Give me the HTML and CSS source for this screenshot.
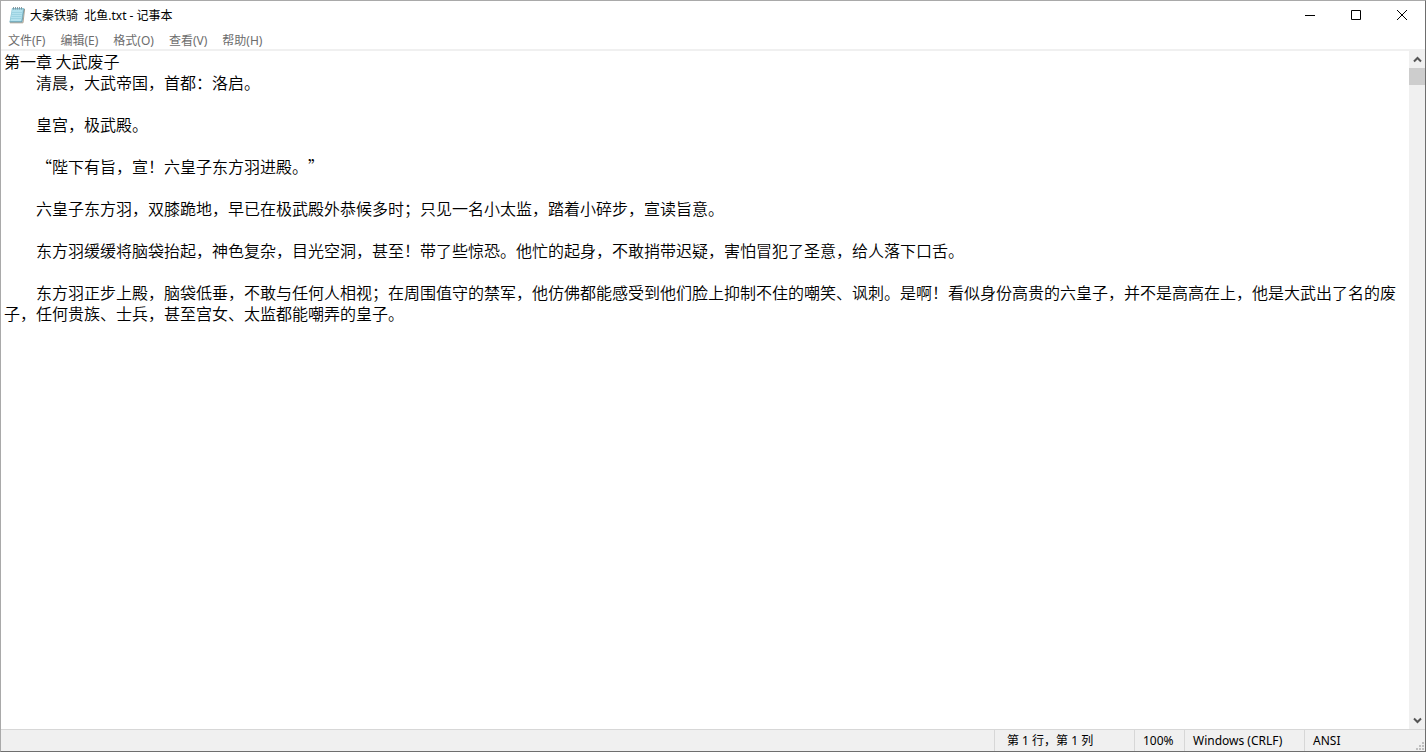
FILE: index.html
```html
<!doctype html>
<html lang="zh-CN">
    <head>
        <meta charset="utf-8">
        <title>大秦铁骑  北鱼.txt - 记事本</title>
        <link rel="stylesheet" href="styles.css">
    </head>
    <body>
        <div id="app">
            <header class="titlebar">
                <svg class="logo" width="16" height="18" viewBox="0 0 16 18">
                    <path d="M15 3L15.6 3L14 16.8L1 16.8" fill="none" stroke="#9a8c76" stroke-width=".8"/>
                    <path d="M3 2 L15 2 L13 16 L0.5 16 Z" fill="#8cc6d6"/>
                    <path d="M3.4 3.5 L13.8 3.5 L12.2 15 L1.4 15 Z" fill="#b4e2ee"/>
                    <path d="M3 6.5H13M2.6 8.5H12.7M2.4 10.5H12.4M2 12.5H12" stroke="#93cddd" stroke-width=".7"/>
                    <path d="M0.5 16 L13 16 L15 3" fill="none" stroke="#5f909f" stroke-width=".8"/>
                    <path d="M4.5 1V3.5M6.5 1V3.5M8.5 1V3.5M10.5 1V3.5M12.5 1V3.5" stroke="#7d9097" stroke-width=".9"/>
                </svg>
                <h1>大秦铁骑  北鱼.txt - 记事本</h1>
                <div class="controls">
                    <button aria-label="最小化"><svg width="10" height="10" viewBox="0 0 10 10"><path d="M0 5.5H10"/></svg></button>
                    <button aria-label="最大化"><svg width="10" height="10" viewBox="0 0 10 10"><path d="M.5 .5H9.5V9.5H.5Z"/></svg></button>
                    <button aria-label="关闭"><svg width="10" height="10" viewBox="0 0 10 10"><path d="M0 0L10 10M10 0L0 10"/></svg></button>
                </div>
            </header>
            <nav class="menu">
                <button>文件(F)</button>
                <button>编辑(E)</button>
                <button>格式(O)</button>
                <button>查看(V)</button>
                <button>帮助(H)</button>
            </nav>
            <main class="editor">
                <textarea aria-label="文本编辑器" spellcheck="false">第一章 大武废子
　　清晨，大武帝国，首都：洛启。

　　皇宫，极武殿。

　　“陛下有旨，宣！六皇子东方羽进殿。”

　　六皇子东方羽，双膝跪地，早已在极武殿外恭候多时；只见一名小太监，踏着小碎步，宣读旨意。

　　东方羽缓缓将脑袋抬起，神色复杂，目光空洞，甚至！带了些惊恐。他忙的起身，不敢捎带迟疑，害怕冒犯了圣意，给人落下口舌。

　　东方羽正步上殿，脑袋低垂，不敢与任何人相视；在周围值守的禁军，他仿佛都能感受到他们脸上抑制不住的嘲笑、讽刺。是啊！看似身份高贵的六皇子，并不是高高在上，他是大武出了名的废子，任何贵族、士兵，甚至宫女、太监都能嘲弄的皇子。</textarea>
                <div class="scrollbar">
                    <button aria-label="向上滚动"><svg width="9" height="7" viewBox="0 0 9 7"><path d="M1 5.5L4.5 2L8 5.5"/></svg></button>
                    <div class="track"><div class="thumb"></div></div>
                    <button aria-label="向下滚动"><svg width="9" height="7" viewBox="0 0 9 7"><path d="M1 1.5L4.5 5L8 1.5"/></svg></button>
                </div>
            </main>
            <footer class="status">
                <span class="position">第 1 行，第 1 列</span>
                <span class="zoom">100%</span>
                <span class="newline">Windows (CRLF)</span>
                <span class="encoding">ANSI</span>
                <svg class="grip" width="9" height="9" viewBox="0 0 9 9">
                    <path d="M6 0h2v2h-2zM3 3h2v2h-2zM6 3h2v2h-2zM0 6h2v2h-2zM3 6h2v2h-2zM6 6h2v2h-2z"/>
                </svg>
            </footer>
        </div>
    </body>
</html>
```
FILE: styles.css
```css
* { margin: 0; padding: 0; box-sizing: border-box; }

body {
    height: 100vh;
    font-family: "Noto Sans", "Noto Sans CJK SC", sans-serif;
    font-size: 12px;
    color: #000;
    background: #fff;
}

button {
    border: none;
    background: transparent;
    font-family: inherit;
    font-size: inherit;
    color: inherit;
}

#app {
    height: 100%;
    display: flex;
    flex-direction: column;
    border: 1px solid #a9a9a9;
    border-right-color: #6e6e6e;
    border-bottom-color: #6e6e6e;
}

.titlebar {
    display: flex;
    align-items: center;
    height: 28px;
    padding-left: 8px;
}

.titlebar h1 {
    flex: 1;
    padding-left: 5px;
    font-size: 12px;
    font-weight: normal;
    white-space: pre;
}

.controls {
    display: flex;
    height: 100%;
}

.controls button {
    display: flex;
    align-items: center;
    justify-content: center;
    width: 46px;
}

.controls path {
    fill: none;
    stroke: #000;
}

.menu {
    display: flex;
    gap: 15px;
    height: 22px;
    padding: 2px 0 0 7px;
    border-bottom: 2px solid #f0f0f0;
    color: #6d6d6d;
}

.editor {
    flex: 1;
    display: flex;
    min-height: 0;
}

textarea {
    flex: 1;
    padding-left: 3px;
    border: none;
    outline: none;
    resize: none;
    overflow: hidden;
    font-family: "Noto Sans CJK SC", sans-serif;
    font-size: 16px;
    font-weight: 350;
    line-height: 21px;
    text-spacing-trim: space-all;
    color: #000;
}

.scrollbar {
    display: flex;
    flex-direction: column;
    width: 16px;
    background: #f0f0f0;
}

.scrollbar button {
    display: flex;
    align-items: center;
    justify-content: center;
    height: 17px;
}

.scrollbar path {
    fill: none;
    stroke: #555;
    stroke-width: 2;
}

.track {
    flex: 1;
}

.thumb {
    height: 17px;
    background: #cdcdcd;
}

.status {
    display: flex;
    justify-content: flex-end;
    height: 22px;
    line-height: 21px;
    background: #f0f0f0;
    border-top: 1px solid #d7d7d7;
}

.status span {
    padding-left: 8px;
    border-left: 1px solid #d7d7d7;
    white-space: nowrap;
}

.status .position {
    width: 140px;
    padding-left: 12px;
}

.status .zoom {
    width: 50px;
}

.status .newline {
    width: 120px;
}

.status .encoding {
    width: 112px;
}

.grip {
    align-self: flex-end;
    fill: #bfbfbf;
}
```
